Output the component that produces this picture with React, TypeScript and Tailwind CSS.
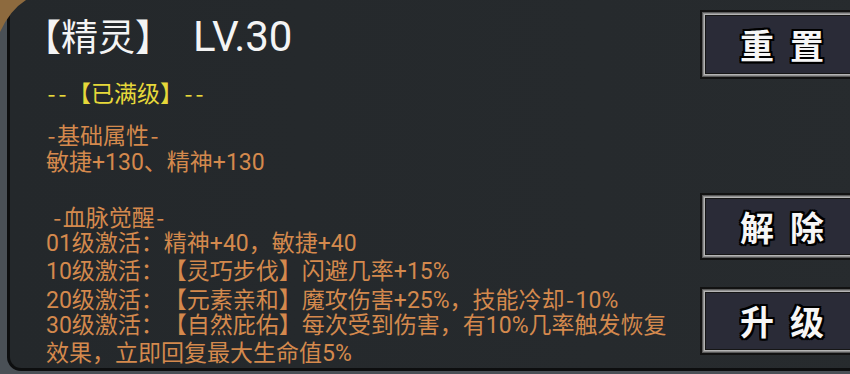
import React from 'react';

const body = "font-['Roboto','Noto_Sans_CJK_SC',sans-serif] [text-spacing-trim:space-all]";

// the game font draws its hyphen wide, so give each one its own box
function Dash() {
    return <span className="inline-block w-[11px] text-center font-['Noto_Sans_CJK_SC',sans-serif]">-</span>;
}

function withDashes(text: string) {
    const parts = text.split('-');
    return parts.map((p, i) => (
        <React.Fragment key={i}>
            {p}
            {i < parts.length - 1 && <Dash />}
        </React.Fragment>
    ));
}

function GameButton({ label, className }: { label: [string, string]; className: string }) {
    return (
        <div className={`w-[164px] shrink-0 border-2 border-[#121212] bg-[#8c8c8c] p-[3px] shadow-[inset_0_0_0_1px_#5a5a5a] ${className}`}>
            <div className="flex h-full items-center justify-center gap-[16px] border border-[#161616] bg-[#2a2b37] shadow-[0_0_0_1px_#b4b4b4]">
                {label.map((ch) => (
                    <span
                        key={ch}
                        className="font-['Noto_Sans_CJK_SC',sans-serif] text-[34px] font-bold leading-none text-[#f6f6f6] [text-shadow:0_0_2px_#000,2px_2px_0_#000,-2px_-2px_0_#000,2px_-2px_0_#000,-2px_2px_0_#000,0_2px_0_#000,0_-2px_0_#000,2px_0_0_#000,-2px_0_0_#000]"
                    >
                        {ch}
                    </span>
                ))}
            </div>
        </div>
    );
}

const lines = [
    '-基础属性-',
    '敏捷+130、精神+130',
    '',
    ' -血脉觉醒-',
    '01级激活：精神+40，敏捷+40',
    '10级激活：【灵巧步伐】闪避几率+15%',
    '20级激活：【元素亲和】魔攻伤害+25%，技能冷却-10%',
    '30级激活：【自然庇佑】每次受到伤害，有10%几率触发恢复',
    '效果，立即回复最大生命值5%',
];

export default function App() {
    return (
        <div className="relative h-[374px] w-[850px] overflow-hidden bg-[#42474c]">
            <div className="flex h-full w-full bg-[#4a5056] pb-[3px] pl-[7px]">
                {/* Main panel */}
                <div className="-mr-[40px] flex flex-1 rounded-bl-[14px] border-b-[3px] border-l-[3px] border-[#0d0e0f] bg-gradient-to-r from-[#24282b] to-[#272b2e]">
                    {/* Text column */}
                    <div className={`w-[690px] shrink-0 pl-[14px] pt-[15px] ${body}`}>
                        <div className="flex h-[44px] items-baseline whitespace-nowrap text-[37px] leading-[44px] text-[#f4f4f4]">
                            <span>【精灵】</span>
                            <span className="ml-[21px] text-[42px]">LV.30</span>
                        </div>
                        <div className="ml-[22px] mt-[20px] whitespace-pre text-[23px] leading-[27.3px] text-[#e6d83a]">
                            <Dash /><Dash />【已满级】<Dash /><Dash />
                        </div>
                        <div className="ml-[22px] mt-[13px] text-[23px] leading-[27.3px] text-[#d4894d]">
                            {lines.map((l, i) => (
                                <div key={i} className="h-[27.3px] whitespace-pre">
                                    {withDashes(l)}
                                </div>
                            ))}
                        </div>
                    </div>

                    {/* Buttons */}
                    <div className="flex flex-col">
                        <GameButton label={['重', '置']} className="mt-[10px] h-[69px]" />
                        <GameButton label={['解', '除']} className="mt-[114px] h-[67px]" />
                        <GameButton label={['升', '级']} className="mt-[27px] h-[68px]" />
                    </div>
                </div>
            </div>

            {/* brown frame corner peeking over the panel */}
            <svg className="absolute left-0 top-0" width="30" height="34" viewBox="0 0 30 34">
                <path d="M0 0 H26 Q10 10 0 32 Z" fill="#8d6a3e" />
            </svg>
        </div>
    );
}
